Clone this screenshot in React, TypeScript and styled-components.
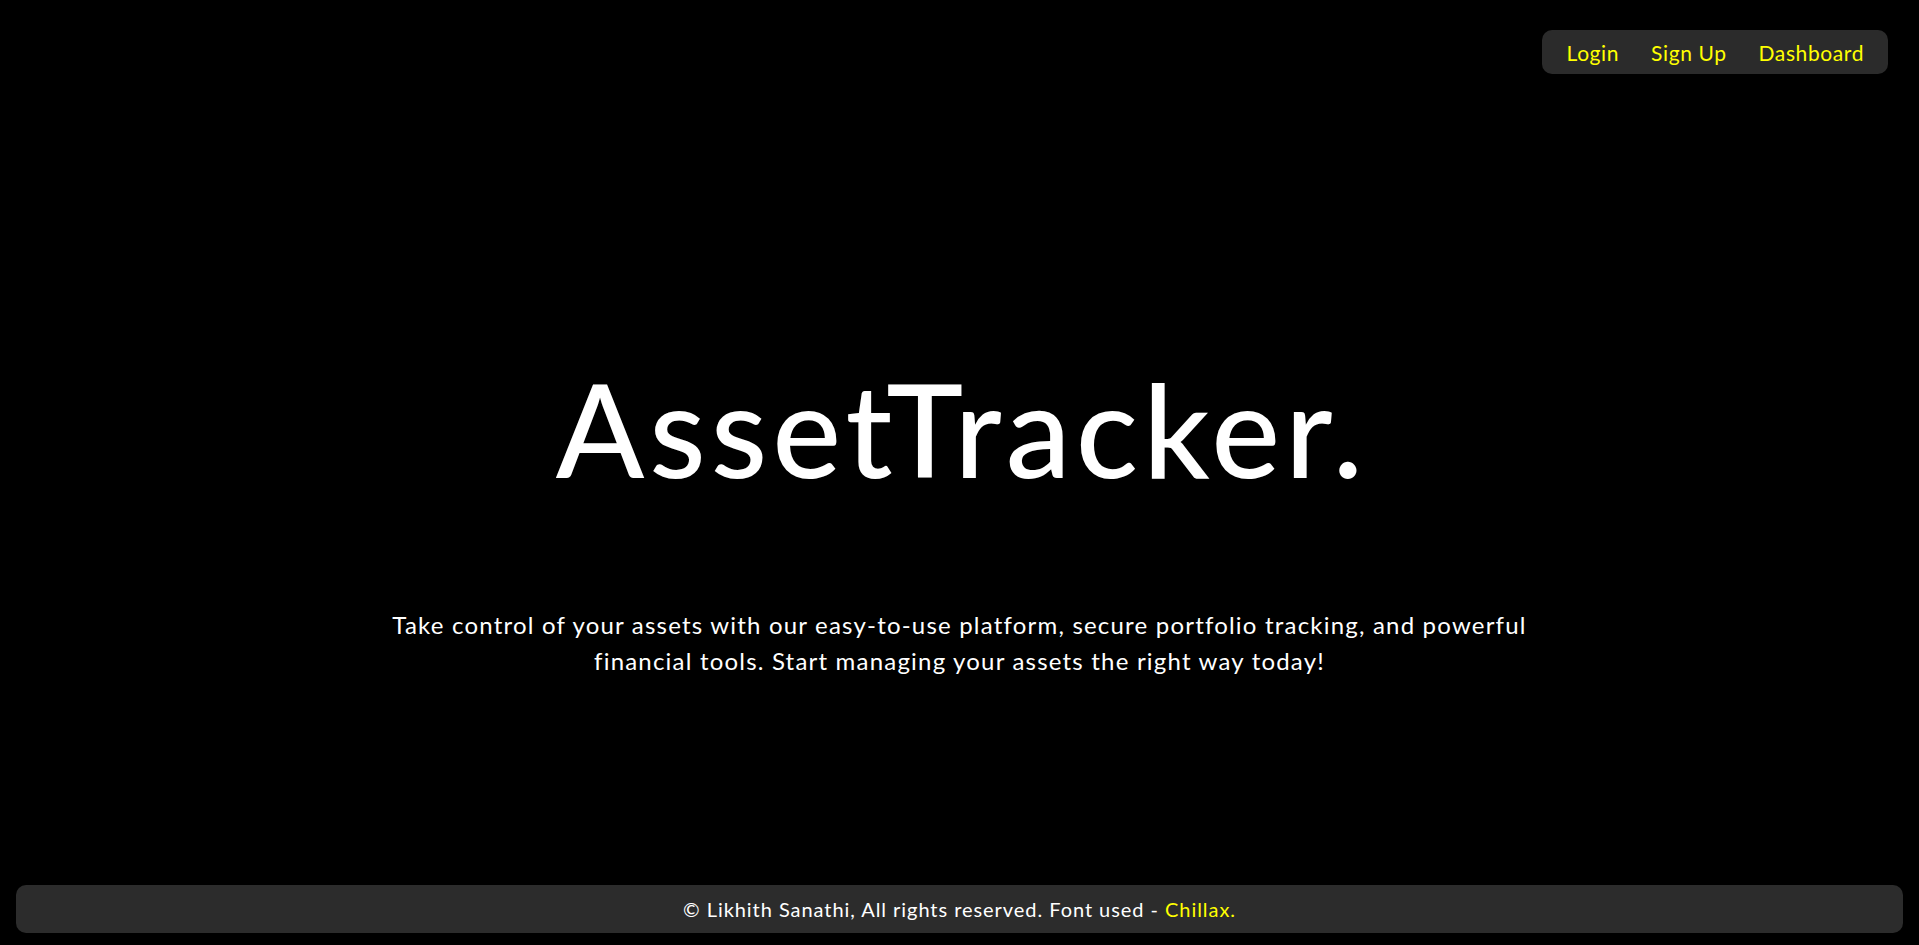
import React from "react";
import styled, { createGlobalStyle } from "styled-components";

const GlobalStyle = createGlobalStyle`
  html, body {
    margin: 0;
    padding: 0;
    background: #000000;
  }
  body {
    font-family: "Lato", "Open Sans", sans-serif;
    color: #ffffff;
  }
  * { box-sizing: border-box; }
`;

const Page = styled.div`
  min-height: 100vh;
  display: flex;
  flex-direction: column;
  background: #000000;
`;

const Header = styled.header`
  display: flex;
  justify-content: flex-end;
  padding: 30px 31px 0 0;
`;

const Nav = styled.nav`
  display: flex;
  align-items: center;
  gap: 32px;
  height: 44px;
  padding: 0 24px 0 25px;
  background: #2b2b2b;
  border-radius: 10px;
`;

const NavLink = styled.a`
  color: #ffff00;
  font-size: 21px;
  letter-spacing: 0.6px;
  text-decoration: none;
  cursor: pointer;
`;

const Hero = styled.main`
  flex: 1;
  display: flex;
  flex-direction: column;
  align-items: center;
  padding-top: 289px;
`;

const Title = styled.h1`
  margin: 0;
  padding-left: 5px;
  font-size: 130px;
  font-weight: 500;
  line-height: 1;
  color: #ffffff;
  letter-spacing: 5px;
`;

const Tagline = styled.p`
  margin: 114px 0 0;
  font-size: 24px;
  letter-spacing: 1.2px;
  line-height: 36px;
  text-align: center;
  color: #ffffff;
`;

const Footer = styled.footer`
  margin: 0 16px 12px;
  height: 48px;
  display: flex;
  align-items: center;
  justify-content: center;
  background: #2c2c2c;
  border-radius: 10px;
  font-size: 20px;
  letter-spacing: 0.95px;
  color: #ffffff;
`;

const Highlight = styled.span`
  color: #ffff00;
`;

export default function App() {
  return (
    <>
      <GlobalStyle />
      <Page>
        <Header>
          <Nav>
            <NavLink>Login</NavLink>
            <NavLink>Sign Up</NavLink>
            <NavLink>Dashboard</NavLink>
          </Nav>
        </Header>
        <Hero>
          <Title>AssetTracker.</Title>
          <Tagline>
            Take control of your assets with our easy-to-use platform, secure portfolio tracking, and powerful
            <br />
            financial tools. Start managing your assets the right way today!
          </Tagline>
        </Hero>
        <Footer>
          <span>
            © Likhith Sanathi, All rights reserved. Font used - <Highlight>Chillax.</Highlight>
          </span>
        </Footer>
      </Page>
    </>
  );
}
